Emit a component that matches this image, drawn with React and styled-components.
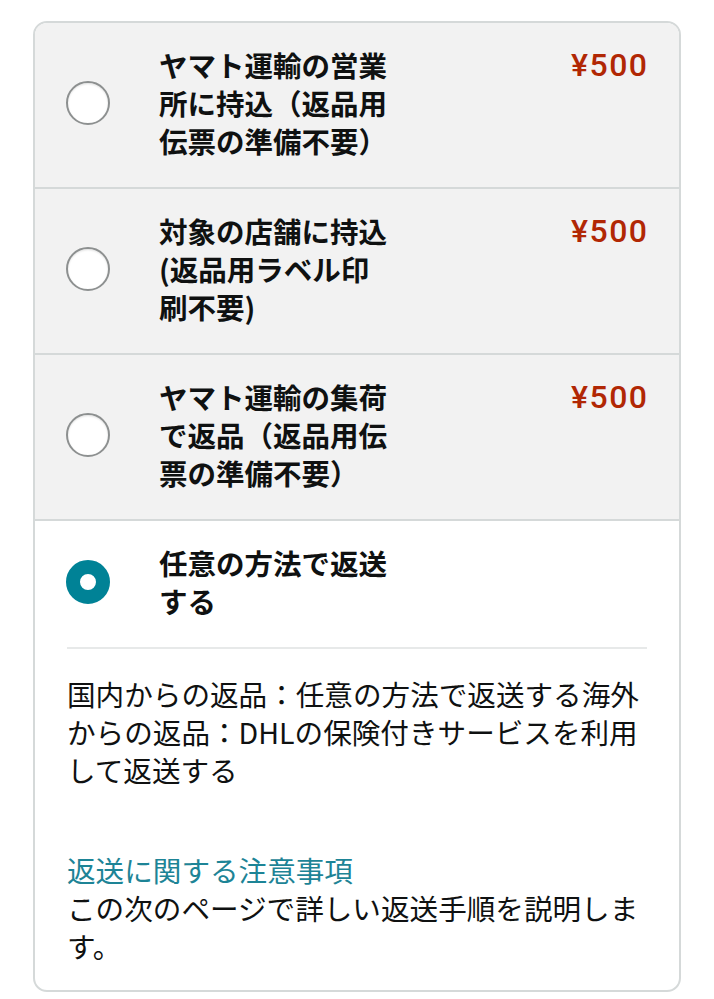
import styled, { createGlobalStyle } from 'styled-components';

const GlobalStyle = createGlobalStyle`
    body {
        margin: 0;
        background: #fff;
        font-family: 'Noto Sans CJK JP', 'Noto Sans', sans-serif;
        color: #0f1111;
    }
`;

const Page = styled.div`
    padding: 21px 33px 0;
`;

const Card = styled.div`
    border: 2px solid #d5d9d9;
    border-radius: 14px;
    overflow: hidden;
`;

const Option = styled.div`
    display: flex;
    align-items: center;
    padding: 23px 32px 27px 31px;
    background: ${p => (p.$selected ? '#fff' : '#f2f2f2')};
    border-top: ${p => (p.$first ? 'none' : '2px solid #d5d9d9')};
`;

const Radio = styled.span`
    flex: none;
    box-sizing: border-box;
    width: 44px;
    height: 44px;
    border-radius: 50%;
    background: #fff;
    border: ${p => (p.$checked ? '14px solid #008296' : '2px solid #8d9090')};
    box-shadow: ${p => (p.$checked ? 'none' : 'inset 0 1px 2px rgba(15,17,17,.12)')};
`;

const Title = styled.div`
    width: 232px;
    margin-left: 49px;
    font-size: 28.5px;
    line-height: 38px;
    font-weight: 700;
`;

const Price = styled.div`
    margin-left: auto;
    align-self: flex-start;
    font-family: Roboto, 'Noto Sans CJK JP', sans-serif;
    font-size: 32px;
    line-height: 38px;
    font-weight: 500;
    letter-spacing: 1.5px;
    margin-right: -1.5px;
    color: #b12704;
`;

const Details = styled.div`
    padding: 0 32px 25px 32px;
`;

const Divider = styled.hr`
    margin: 0 0 26px;
    border: none;
    border-top: 2px solid #e7e9e9;
`;

const Text = styled.p`
    margin: 0;
    font-size: 28.6px;
    line-height: 38px;
`;

const Note = styled.div`
    margin-top: 62px;
`;

const NoteLink = styled.a`
    display: block;
    font-size: 28.6px;
    line-height: 38px;
    color: #1d8496;
    text-decoration: none;
`;

const options = [
    { title: 'ヤマト運輸の営業所に持込（返品用伝票の準備不要）', price: '¥500' },
    { title: '対象の店舗に持込(返品用ラベル印刷不要)', price: '¥500' },
    { title: 'ヤマト運輸の集荷で返品（返品用伝票の準備不要）', price: '¥500' },
    { title: '任意の方法で返送する', selected: true },
];

const App = () => (
    <Page>
        <GlobalStyle />
        <Card>
            {options.map((opt, i) => (
                <div key={opt.title}>
                    <Option $selected={opt.selected} $first={i === 0}>
                        <Radio $checked={opt.selected} />
                        <Title>{opt.title}</Title>
                        {opt.price && <Price>{opt.price}</Price>}
                    </Option>
                    {opt.selected && (
                        <Details>
                            <Divider />
                            <Text>
                                国内からの返品：任意の方法で返送する海外からの返品：DHLの保険付きサービスを利用して返送する
                            </Text>
                            <Note>
                                <NoteLink href="#">返送に関する注意事項</NoteLink>
                                <Text>この次のページで詳しい返送手順を説明します。</Text>
                            </Note>
                        </Details>
                    )}
                </div>
            ))}
        </Card>
    </Page>
);

export default App;
